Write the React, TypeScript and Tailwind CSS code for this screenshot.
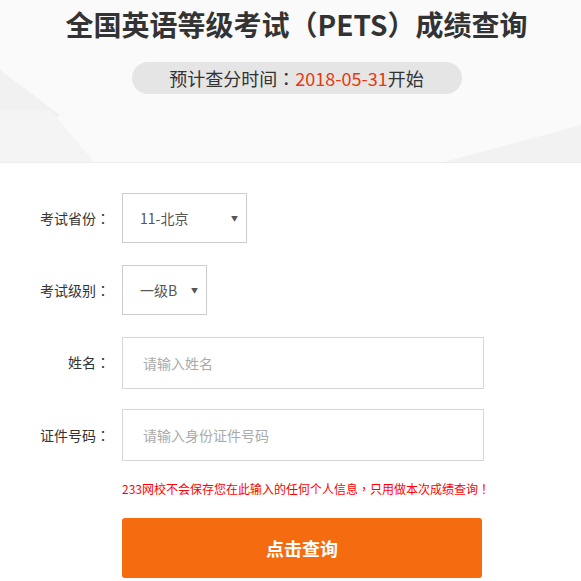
const font = { fontFamily: '"Noto Sans CJK SC", "Noto Sans", sans-serif' };
const tc = { fontFamily: '"Noto Sans CJK TC", "Noto Sans CJK SC", sans-serif' };

function Colon() {
  return <span style={tc}>：</span>;
}

function Row({ label, children }: { label: string; children: React.ReactNode }) {
  return (
    <div className="flex h-[72px] items-start">
      <div className="flex h-[50px] w-[110px] shrink-0 items-center justify-end text-[14px] text-[#333]">
        {label}
        <Colon />
      </div>
      <div className="ml-3">{children}</div>
    </div>
  );
}

function Select({ value, width }: { value: string; width: string }) {
  return (
    <div className={`flex h-[50px] items-center justify-between border border-[#ccc] bg-white pl-[17px] pr-[8px] text-[14px] text-[#555] ${width}`}>
      <span>{value}</span>
      <span className="text-[7px] text-[#555]">▼</span>
    </div>
  );
}

function Input({ placeholder }: { placeholder: string }) {
  return (
    <div className="flex h-[52px] w-[362px] items-center border border-[#d6d6d6] bg-white pl-[20px] text-[14px] text-[#aaa]">
      {placeholder}
    </div>
  );
}

export default function App() {
  return (
    <div className="min-h-screen w-[581px] bg-white" style={font}>
      <header className="relative h-[163px] overflow-hidden border-b border-[#ececec] bg-[#fafafa]">
        <svg className="absolute inset-0" width="581" height="163" viewBox="0 0 581 163">
          <polygon points="0,70 60,115 0,163" fill="#f1f1f1" />
          <polygon points="0,110 50,110 95,163 0,163" fill="#f4f4f4" />
          <polygon points="440,163 581,125 581,163" fill="#f2f2f2" />
        </svg>
        <div className="relative flex flex-col items-center pl-[12px]">
          <h1 className="mt-[4px] text-[28px] font-bold leading-[40px] text-[#333]">
            全国英语等级考试<span style={tc}>（</span>PETS<span style={tc}>）</span>成绩查询
          </h1>
          <div className="mt-[18px] flex h-[32px] w-[330px] items-center justify-center rounded-full bg-[#e5e5e5] text-[18px] text-[#333]">
            预计查分时间<Colon /><span className="text-[#e8380d]">2018-05-31</span>开始
          </div>
        </div>
      </header>

      <main className="pt-[30px]">
        <Row label="考试省份">
          <Select value="11-北京" width="w-[125px]" />
        </Row>
        <Row label="考试级别">
          <Select value="一级B" width="w-[85px]" />
        </Row>
        <Row label="姓名">
          <Input placeholder="请输入姓名" />
        </Row>
        <div className="flex h-[52px] items-start">
          <div className="flex h-[52px] w-[110px] shrink-0 items-center justify-end text-[14px] text-[#333]">
            证件号码
            <Colon />
          </div>
          <div className="ml-3">
            <Input placeholder="请输入身份证件号码" />
          </div>
        </div>
      </main>

      <div className="ml-[122px] mt-[20px] text-[12px] leading-[16px] text-[#ff0000]">
        233网校不会保存您在此输入的任何个人信息<span style={tc}>，</span>只用做本次成绩查询<span style={tc}>！</span>
      </div>
      <button className="ml-[122px] mt-[21px] flex h-[60px] w-[360px] items-center justify-center rounded-[3px] bg-[#f56b0f] text-[18px] font-bold text-white">
        点击查询
      </button>
    </div>
  );
}
